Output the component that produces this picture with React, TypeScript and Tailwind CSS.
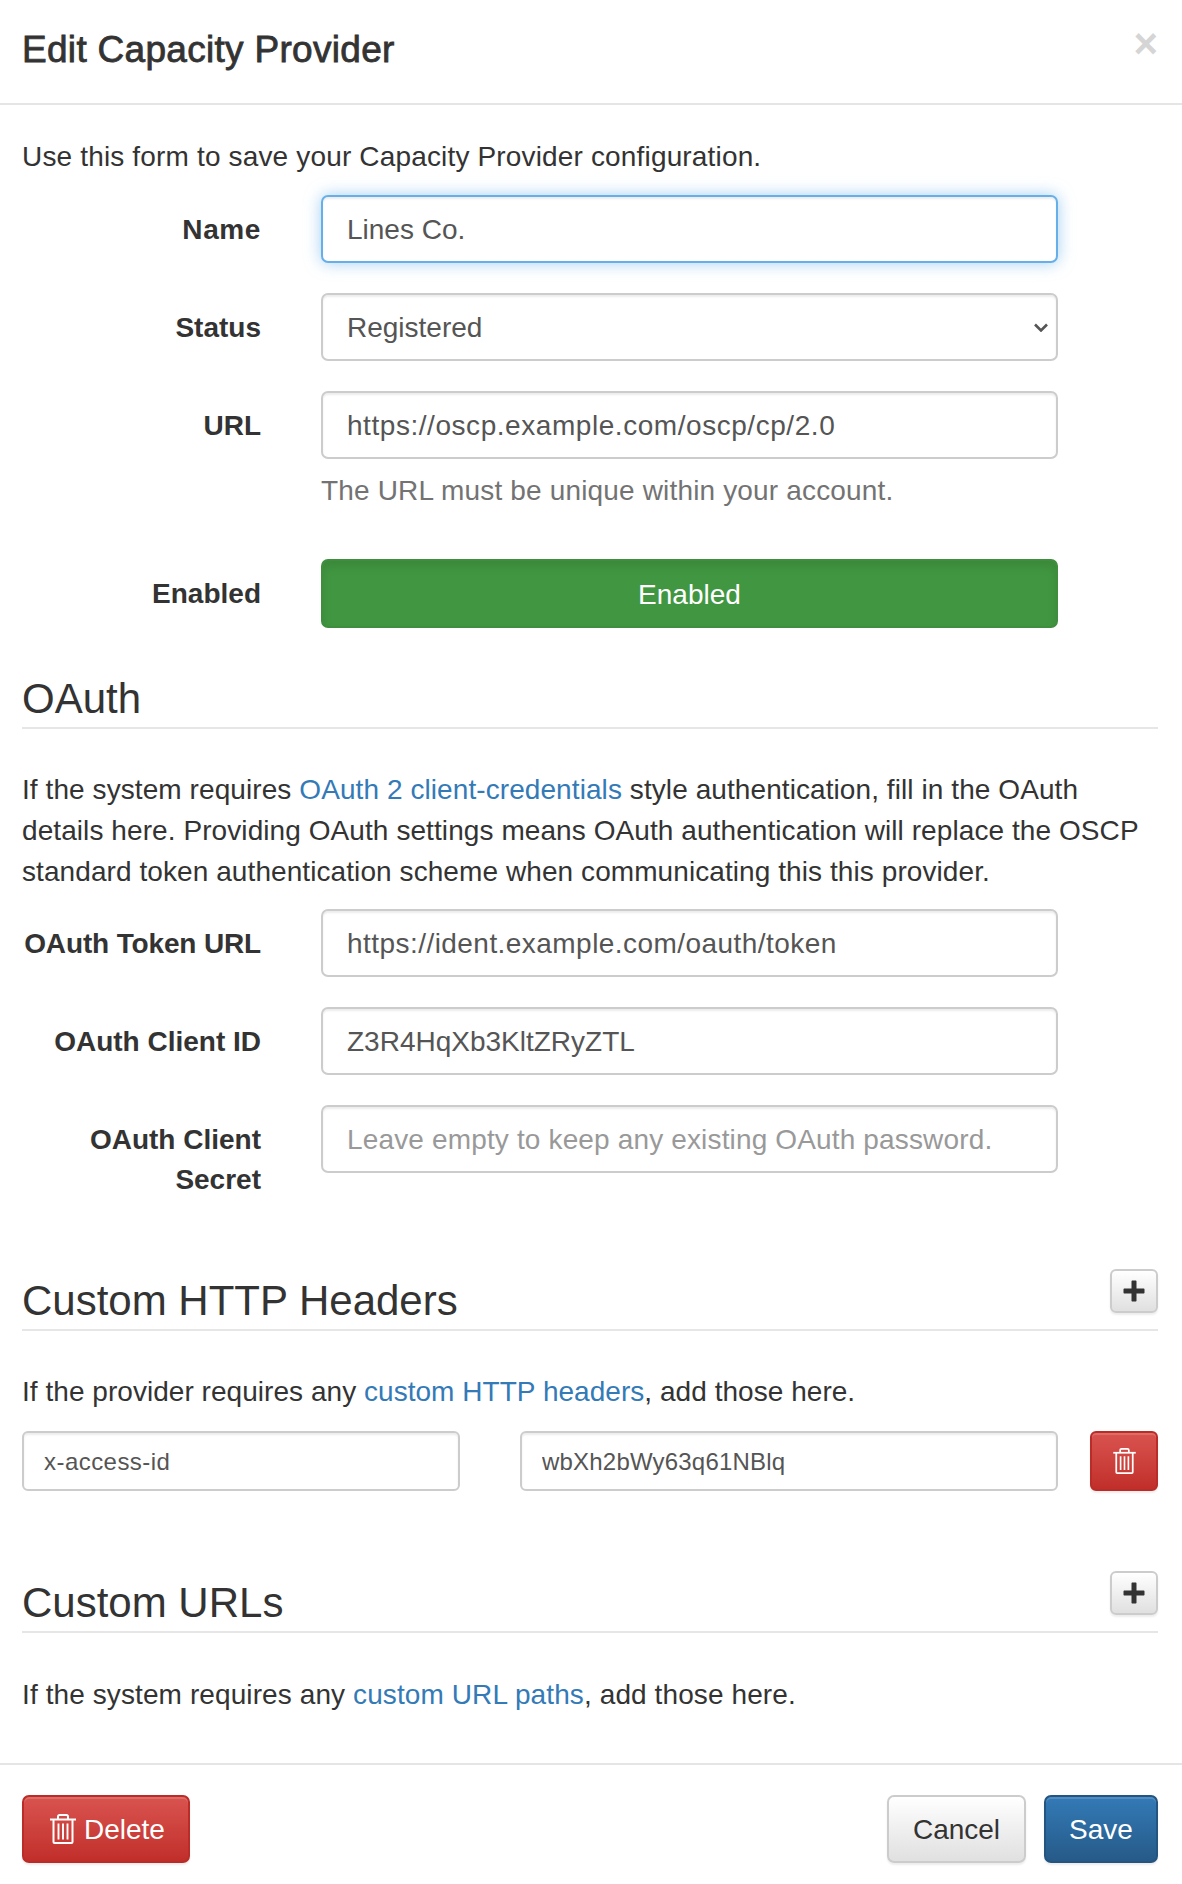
import type { ReactNode } from 'react';

const font = { fontFamily: '"Liberation Sans", Arial, sans-serif' };

const inputCls =
  'block h-[68px] w-full rounded-[7px] border-2 border-[#ccc] bg-white px-[24px] pt-[2px] text-[28px] text-[#555] outline-none placeholder:text-[#999] shadow-[inset_0_2px_2px_rgba(0,0,0,0.075)]';

const smallInputCls =
  'block h-[60px] rounded-[6px] border-2 border-[#ccc] bg-white px-[20px] pt-[2px] text-[24px] text-[#555] outline-none shadow-[inset_0_2px_2px_rgba(0,0,0,0.075)]';

function TrashIcon({ className }: { className: string }) {
  return (
    <svg viewBox="0 0 26 30" className={className} fill="none" stroke="currentColor">
      <path d="M0 5.5h26" strokeWidth="2" />
      <path d="M8 5V2.6C8 1.6 8.6 1 9.6 1h6.8c1 0 1.6.6 1.6 1.6V5" strokeWidth="2" />
      <path d="M3.5 5.5V28c0 .6.4 1 1 1h17c.6 0 1-.4 1-1V5.5" strokeWidth="2" />
      <path d="M8.5 9.5v16M13 9.5v16M17.5 9.5v16" strokeWidth="1.9" />
    </svg>
  );
}

function PlusButton() {
  return (
    <button className="flex h-[44px] w-[48px] items-center justify-center rounded-[6px] border-2 border-[#ccc] bg-gradient-to-b from-white to-[#e0e0e0] text-[#333] shadow-[inset_0_2px_0_rgba(255,255,255,0.15),0_2px_2px_rgba(0,0,0,0.075)]">
      <svg viewBox="0 0 22 22" className="h-[22px] w-[22px]" fill="currentColor">
        <path d="M8.5 1.5c0-.6.4-1 1-1h3c.6 0 1 .4 1 1v7h7c.6 0 1 .4 1 1v3c0 .6-.4 1-1 1h-7v7c0 .6-.4 1-1 1h-3c-.6 0-1-.4-1-1v-7h-7c-.6 0-1-.4-1-1v-3c0-.6.4-1 1-1h7z" />
      </svg>
    </button>
  );
}

function Row({ label, children, className }: { label: ReactNode; children: ReactNode; className: string }) {
  return (
    <div className={`grid grid-cols-[239px_737px] gap-x-[60px] ${className}`}>
      <label className="pt-[15px] text-right text-[28px] font-bold leading-[40px] text-[#333]">{label}</label>
      <div>{children}</div>
    </div>
  );
}

function SectionHead({ title, action, className }: { title: string; action?: ReactNode; className: string }) {
  return (
    <div className={`flex items-end justify-between border-b-2 border-[#e6e6e6] ${className}`}>
      <h3 className="mb-[2px] text-[42px] font-normal leading-[52px] text-[#333]">{title}</h3>
      {action && <div className="mb-[16px]">{action}</div>}
    </div>
  );
}

function A({ children }: { children: ReactNode }) {
  return <a className="text-[#337ab7]">{children}</a>;
}

export default function App() {
  return (
    <div className="h-[1884px] w-[1182px] overflow-hidden bg-white text-[#333]" style={font}>
      <div className="flex h-[105px] items-start justify-between border-b-2 border-[#e5e5e5] pl-[22px] pr-[24px]">
        <h4 className="mt-[28px] text-[37px] font-normal leading-[44px] tracking-[0.3px] text-[#333] [-webkit-text-stroke:0.8px_#333]">
          Edit Capacity Provider
        </h4>
        <span className="mt-[20px] text-[42px] font-bold leading-[48px] text-[#333] opacity-20">×</span>
      </div>

      <div className="pl-[22px] pr-[24px]">
        <p className="mt-[32px] text-[28px] leading-[40px] tracking-[0.16px]">
          Use this form to save your Capacity Provider configuration.
        </p>

        <Row label={<span className="tracking-[0.6px]">Name</span>} className="mt-[18px]">
          <input
            defaultValue="Lines Co."
            className="block h-[68px] w-full rounded-[7px] border-2 border-[#66afe9] bg-white px-[24px] pt-[2px] text-[28px] text-[#555] shadow-[inset_0_2px_2px_rgba(0,0,0,0.075),0_0_16px_rgba(102,175,233,0.6)] outline-none"
          />
        </Row>
        <Row label="Status" className="mt-[30px]">
          <div className="relative">
            <select defaultValue="Registered" className={`${inputCls} appearance-none`}>
              <option>Registered</option>
            </select>
            <svg
              viewBox="0 0 14 9"
              className="absolute right-[10px] top-[30px] h-[9px] w-[14px] text-[#555]"
              fill="none"
              stroke="currentColor"
              strokeWidth="2.6"
            >
              <path d="M1 1.5l6 6 6-6" />
            </svg>
          </div>
        </Row>
        <Row label="URL" className="mt-[30px]">
          <input defaultValue="https://oscp.example.com/oscp/cp/2.0" className={`${inputCls} tracking-[0.55px]`} />
          <p className="mt-[12px] text-[28px] leading-[40px] tracking-[0.16px] text-[#737373]">
            The URL must be unique within your account.
          </p>
        </Row>
        <Row label="Enabled" className="mt-[48px]">
          <button className="block h-[69px] w-full rounded-[7px] border-2 border-[#3e8e3e] bg-[#419741] pt-[2px] text-[28px] text-white shadow-[inset_0_6px_10px_rgba(0,0,0,0.1)]">
            Enabled
          </button>
        </Row>

        <SectionHead title="OAuth" className="mt-[38px] h-[63px]" />
        <p className="mt-[40px] text-[28px] leading-[41px] tracking-[0.08px]">
          If the system requires <A>OAuth 2 client-credentials</A> style authentication, fill in the OAuth details here.
          Providing OAuth settings means OAuth authentication will replace the OSCP standard token authentication scheme
          when communicating this this provider.
        </p>

        <Row label={<span className="tracking-[-0.15px]">OAuth Token URL</span>} className="mt-[17px]">
          <input defaultValue="https://ident.example.com/oauth/token" className={`${inputCls} tracking-[0.45px]`} />
        </Row>
        <Row label="OAuth Client ID" className="mt-[30px]">
          <input defaultValue="Z3R4HqXb3KltZRyZTL" className={inputCls} />
        </Row>
        <Row label="OAuth Client Secret" className="mt-[30px]">
          <input
            placeholder="Leave empty to keep any existing OAuth password."
            className={`${inputCls} tracking-[0.15px]`}
          />
        </Row>

        <SectionHead title="Custom HTTP Headers" action={<PlusButton />} className="mt-[53px] h-[78px]" />
        <p className="mt-[41px] text-[28px] leading-[40px] tracking-[0.04px]">
          If the provider requires any <A>custom HTTP headers</A>, add those here.
        </p>
        <div className="mt-[19px] flex">
          <input defaultValue="x-access-id" className={`${smallInputCls} w-[438px] tracking-[0.45px]`} />
          <input defaultValue="wbXh2bWy63q61NBlq" className={`${smallInputCls} ml-[60px] w-[538px] tracking-[0.2px]`} />
          <button className="ml-[32px] flex h-[60px] w-[68px] items-center justify-center rounded-[6px] border-2 border-[#b92c28] bg-gradient-to-b from-[#d9534f] to-[#c12e2a] text-white shadow-[inset_0_2px_0_rgba(255,255,255,0.15),0_2px_2px_rgba(0,0,0,0.075)]">
            <TrashIcon className="h-[26px] w-[23px]" />
          </button>
        </div>

        <SectionHead title="Custom URLs" action={<PlusButton />} className="mt-[63px] h-[79px]" />
        <p className="mt-[42px] text-[28px] leading-[40px] tracking-[0.1px]">
          If the system requires any <A>custom URL paths</A>, add those here.
        </p>
      </div>

      <div className="mt-[48px] flex items-start justify-between border-t-2 border-[#e5e5e5] pl-[22px] pr-[24px] pt-[30px]">
        <button className="flex h-[68px] w-[168px] items-center gap-[8px] rounded-[7px] border-2 border-[#b92c28] bg-gradient-to-b from-[#d9534f] to-[#c12e2a] pl-[26px] text-[28px] text-white shadow-[inset_0_2px_0_rgba(255,255,255,0.15),0_2px_2px_rgba(0,0,0,0.075)]">
          <TrashIcon className="h-[30px] w-[26px]" />
          <span className="pt-[2px]">Delete</span>
        </button>
        <div className="flex gap-[18px]">
          <button className="h-[68px] w-[139px] rounded-[7px] border-2 border-[#ccc] bg-gradient-to-b from-white to-[#e0e0e0] pt-[2px] text-[28px] text-[#333] shadow-[inset_0_2px_0_rgba(255,255,255,0.15),0_2px_2px_rgba(0,0,0,0.075)]">
            Cancel
          </button>
          <button className="h-[68px] w-[114px] rounded-[7px] border-2 border-[#245580] bg-gradient-to-b from-[#337ab7] to-[#265a88] pt-[2px] text-[28px] text-white shadow-[inset_0_2px_0_rgba(255,255,255,0.15),0_2px_2px_rgba(0,0,0,0.075)]">
            Save
          </button>
        </div>
      </div>
    </div>
  );
}
